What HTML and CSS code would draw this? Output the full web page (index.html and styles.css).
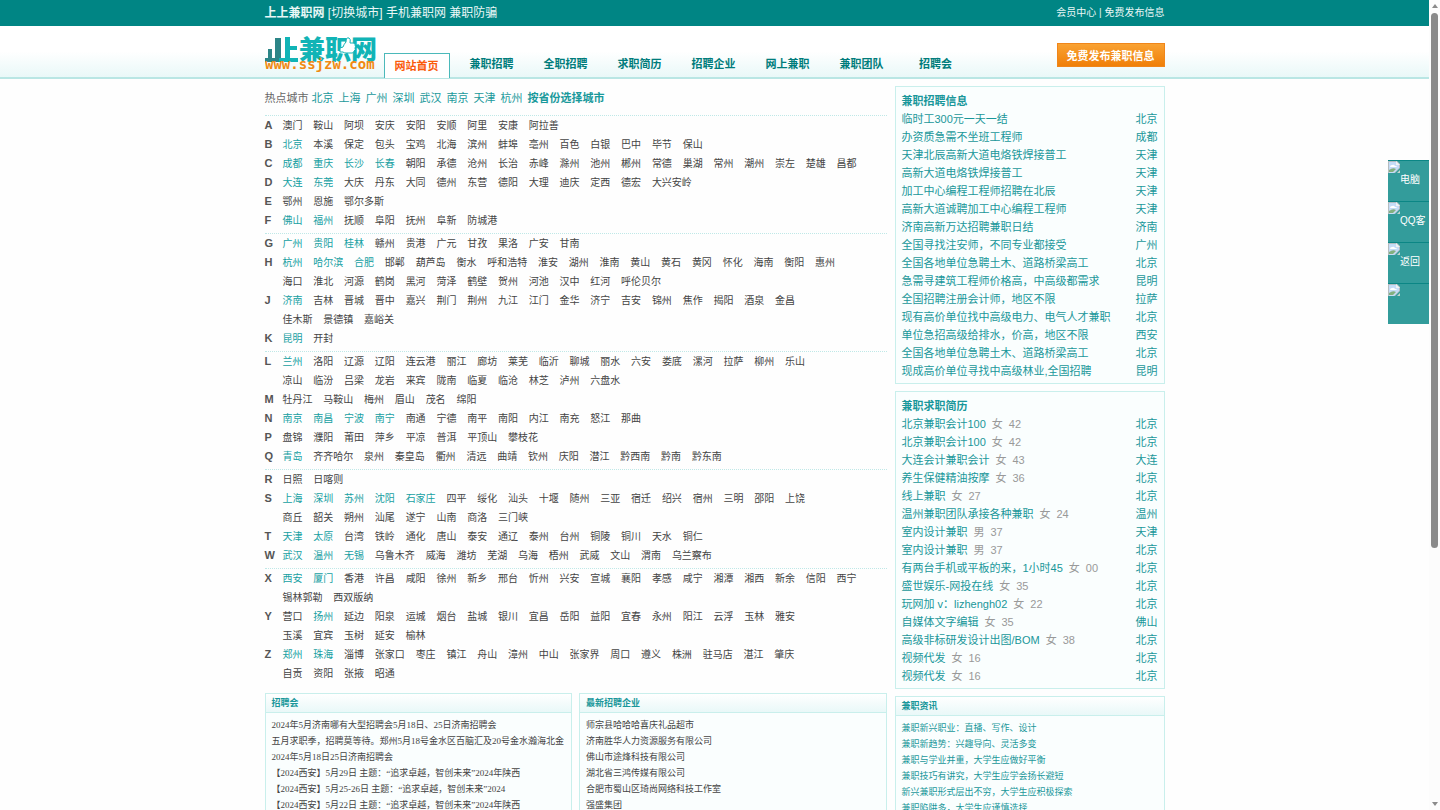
FILE: index.html
```html
<!DOCTYPE html>
<html lang="zh-CN">
<head>
<meta charset="utf-8">
<title>上上兼职网</title>
<link rel="stylesheet" href="styles.css">
</head>
<body>
<svg class="defs" aria-hidden="true">
  <symbol id="broken" viewBox="0 0 12 12">
    <path d="M0 0h9l3 3v4L7 12H0z" fill="#b4bcc0"/>
    <path d="M1 1h7v3h3v3l-5 5H1z" fill="#c5dcf7"/>
    <path d="M2 6q0-2 2-2 2-1 3 1 2 0 2 1z" fill="#fff"/>
    <path d="M1 11V9q4-3 7-1l-3 3z" fill="#84b07f"/>
    <path d="M8 0v4h4z" fill="#eef2f4"/>
    <path d="M12 9v3H9z" fill="#c3d6cc"/>
  </symbol>
</svg>
<div class="topbar">
  <div class="wrap topbar-in">
    <div class="top-left"><a href="#"><b>上上兼职网</b></a> <a href="#">[切换城市]</a> <a href="#">手机兼职网</a> <a href="#">兼职防骗</a></div>
    <div class="top-right"><a href="#">会员中心</a> | <a href="#">免费发布信息</a></div>
  </div>
</div>
<header class="header">
  <div class="wrap header-in">
    <a class="logo" href="#">
      <svg width="116" height="40" viewBox="0 0 116 40" role="img" aria-label="上上兼职网">
        <path d="M10 4h6v24H0v-4h3v-9h4v9h3z" fill="#2c8587"/>
        <path d="M20 3h5v9h7v4h-7v8h8v4H14v-4h6z" fill="#11b4b6"/>
        <text class="logo-cn" x="34" y="25">兼职网</text>
        <path d="M75 14l3-1q1-3 3-5 0-5 3-4 2 1 1 5h3q3 0 2 2 1 2 0 3 1 2-1 3 0 2-2 2h-6q-2 0-3-1h-3z" fill="#fff" stroke="#11b4b6"/>
        <text class="logo-url" x="0" y="35">www.ssjzw.com</text>
      </svg>
    </a>
    <nav class="nav">
      <a class="on" href="#">网站首页</a>
      <a href="#">兼职招聘</a><a href="#">全职招聘</a><a href="#">求职简历</a><a href="#">招聘企业</a><a href="#">网上兼职</a><a href="#">兼职团队</a><a href="#">招聘会</a>
    </nav>
    <button class="post" type="button">免费发布兼职信息</button>
  </div>
</header>
<div class="wrap content">
  <main class="main">
    <div class="hot"><span>热点城市</span> <a href="#">北京</a><a href="#">上海</a><a href="#">广州</a><a href="#">深圳</a><a href="#">武汉</a><a href="#">南京</a><a href="#">天津</a><a href="#">杭州</a><a href="#"><b>按省份选择城市</b></a></div>
    <section class="group">
      <div class="row"><b>A</b><div>
        <p><a>澳门</a> <a>鞍山</a> <a>阿坝</a> <a>安庆</a> <a>安阳</a> <a>安顺</a> <a>阿里</a> <a>安康</a> <a>阿拉善</a></p></div></div>
      <div class="row"><b>B</b><div>
        <p><a class="h">北京</a> <a>本溪</a> <a>保定</a> <a>包头</a> <a>宝鸡</a> <a>北海</a> <a>滨州</a> <a>蚌埠</a> <a>亳州</a> <a>百色</a> <a>白银</a> <a>巴中</a> <a>毕节</a> <a>保山</a></p></div></div>
      <div class="row"><b>C</b><div>
        <p><a class="h">成都</a> <a class="h">重庆</a> <a class="h">长沙</a> <a class="h">长春</a> <a>朝阳</a> <a>承德</a> <a>沧州</a> <a>长治</a> <a>赤峰</a> <a>滁州</a> <a>池州</a> <a>郴州</a> <a>常德</a> <a>巢湖</a> <a>常州</a> <a>潮州</a> <a>崇左</a> <a>楚雄</a> <a>昌都</a></p></div></div>
      <div class="row"><b>D</b><div>
        <p><a class="h">大连</a> <a class="h">东莞</a> <a>大庆</a> <a>丹东</a> <a>大同</a> <a>德州</a> <a>东营</a> <a>德阳</a> <a>大理</a> <a>迪庆</a> <a>定西</a> <a>德宏</a> <a>大兴安岭</a></p></div></div>
      <div class="row"><b>E</b><div>
        <p><a>鄂州</a> <a>恩施</a> <a>鄂尔多斯</a></p></div></div>
      <div class="row"><b>F</b><div>
        <p><a class="h">佛山</a> <a class="h">福州</a> <a>抚顺</a> <a>阜阳</a> <a>抚州</a> <a>阜新</a> <a>防城港</a></p></div></div>
    </section>
    <section class="group">
      <div class="row"><b>G</b><div>
        <p><a class="h">广州</a> <a class="h">贵阳</a> <a class="h">桂林</a> <a>赣州</a> <a>贵港</a> <a>广元</a> <a>甘孜</a> <a>果洛</a> <a>广安</a> <a>甘南</a></p></div></div>
      <div class="row"><b>H</b><div>
        <p><a class="h">杭州</a> <a class="h">哈尔滨</a> <a class="h">合肥</a> <a>邯郸</a> <a>葫芦岛</a> <a>衡水</a> <a>呼和浩特</a> <a>淮安</a> <a>湖州</a> <a>淮南</a> <a>黄山</a> <a>黄石</a> <a>黄冈</a> <a>怀化</a> <a>海南</a> <a>衡阳</a> <a>惠州</a></p>
        <p><a>海口</a> <a>淮北</a> <a>河源</a> <a>鹤岗</a> <a>黑河</a> <a>菏泽</a> <a>鹤壁</a> <a>贺州</a> <a>河池</a> <a>汉中</a> <a>红河</a> <a>呼伦贝尔</a></p></div></div>
      <div class="row"><b>J</b><div>
        <p><a class="h">济南</a> <a>吉林</a> <a>晋城</a> <a>晋中</a> <a>嘉兴</a> <a>荆门</a> <a>荆州</a> <a>九江</a> <a>江门</a> <a>金华</a> <a>济宁</a> <a>吉安</a> <a>锦州</a> <a>焦作</a> <a>揭阳</a> <a>酒泉</a> <a>金昌</a></p>
        <p><a>佳木斯</a> <a>景德镇</a> <a>嘉峪关</a></p></div></div>
      <div class="row"><b>K</b><div>
        <p><a class="h">昆明</a> <a>开封</a></p></div></div>
    </section>
    <section class="group">
      <div class="row"><b>L</b><div>
        <p><a class="h">兰州</a> <a>洛阳</a> <a>辽源</a> <a>辽阳</a> <a>连云港</a> <a>丽江</a> <a>廊坊</a> <a>莱芜</a> <a>临沂</a> <a>聊城</a> <a>丽水</a> <a>六安</a> <a>娄底</a> <a>漯河</a> <a>拉萨</a> <a>柳州</a> <a>乐山</a></p>
        <p><a>凉山</a> <a>临汾</a> <a>吕梁</a> <a>龙岩</a> <a>来宾</a> <a>陇南</a> <a>临夏</a> <a>临沧</a> <a>林芝</a> <a>泸州</a> <a>六盘水</a></p></div></div>
      <div class="row"><b>M</b><div>
        <p><a>牡丹江</a> <a>马鞍山</a> <a>梅州</a> <a>眉山</a> <a>茂名</a> <a>绵阳</a></p></div></div>
      <div class="row"><b>N</b><div>
        <p><a class="h">南京</a> <a class="h">南昌</a> <a class="h">宁波</a> <a class="h">南宁</a> <a>南通</a> <a>宁德</a> <a>南平</a> <a>南阳</a> <a>内江</a> <a>南充</a> <a>怒江</a> <a>那曲</a></p></div></div>
      <div class="row"><b>P</b><div>
        <p><a>盘锦</a> <a>濮阳</a> <a>莆田</a> <a>萍乡</a> <a>平凉</a> <a>普洱</a> <a>平顶山</a> <a>攀枝花</a></p></div></div>
      <div class="row"><b>Q</b><div>
        <p><a class="h">青岛</a> <a>齐齐哈尔</a> <a>泉州</a> <a>秦皇岛</a> <a>衢州</a> <a>清远</a> <a>曲靖</a> <a>钦州</a> <a>庆阳</a> <a>潜江</a> <a>黔西南</a> <a>黔南</a> <a>黔东南</a></p></div></div>
    </section>
    <section class="group">
      <div class="row"><b>R</b><div>
        <p><a>日照</a> <a>日喀则</a></p></div></div>
      <div class="row"><b>S</b><div>
        <p><a class="h">上海</a> <a class="h">深圳</a> <a class="h">苏州</a> <a class="h">沈阳</a> <a class="h">石家庄</a> <a>四平</a> <a>绥化</a> <a>汕头</a> <a>十堰</a> <a>随州</a> <a>三亚</a> <a>宿迁</a> <a>绍兴</a> <a>宿州</a> <a>三明</a> <a>邵阳</a> <a>上饶</a></p>
        <p><a>商丘</a> <a>韶关</a> <a>朔州</a> <a>汕尾</a> <a>遂宁</a> <a>山南</a> <a>商洛</a> <a>三门峡</a></p></div></div>
      <div class="row"><b>T</b><div>
        <p><a class="h">天津</a> <a class="h">太原</a> <a>台湾</a> <a>铁岭</a> <a>通化</a> <a>唐山</a> <a>泰安</a> <a>通辽</a> <a>泰州</a> <a>台州</a> <a>铜陵</a> <a>铜川</a> <a>天水</a> <a>铜仁</a></p></div></div>
      <div class="row"><b>W</b><div>
        <p><a class="h">武汉</a> <a class="h">温州</a> <a class="h">无锡</a> <a>乌鲁木齐</a> <a>威海</a> <a>潍坊</a> <a>芜湖</a> <a>乌海</a> <a>梧州</a> <a>武威</a> <a>文山</a> <a>渭南</a> <a>乌兰察布</a></p></div></div>
    </section>
    <section class="group">
      <div class="row"><b>X</b><div>
        <p><a class="h">西安</a> <a class="h">厦门</a> <a>香港</a> <a>许昌</a> <a>咸阳</a> <a>徐州</a> <a>新乡</a> <a>邢台</a> <a>忻州</a> <a>兴安</a> <a>宣城</a> <a>襄阳</a> <a>孝感</a> <a>咸宁</a> <a>湘潭</a> <a>湘西</a> <a>新余</a> <a>信阳</a> <a>西宁</a></p>
        <p><a>锡林郭勒</a> <a>西双版纳</a></p></div></div>
      <div class="row"><b>Y</b><div>
        <p><a>营口</a> <a class="h">扬州</a> <a>延边</a> <a>阳泉</a> <a>运城</a> <a>烟台</a> <a>盐城</a> <a>银川</a> <a>宜昌</a> <a>岳阳</a> <a>益阳</a> <a>宜春</a> <a>永州</a> <a>阳江</a> <a>云浮</a> <a>玉林</a> <a>雅安</a></p>
        <p><a>玉溪</a> <a>宜宾</a> <a>玉树</a> <a>延安</a> <a>榆林</a></p></div></div>
      <div class="row"><b>Z</b><div>
        <p><a class="h">郑州</a> <a class="h">珠海</a> <a>淄博</a> <a>张家口</a> <a>枣庄</a> <a>镇江</a> <a>舟山</a> <a>漳州</a> <a>中山</a> <a>张家界</a> <a>周口</a> <a>遵义</a> <a>株洲</a> <a>驻马店</a> <a>湛江</a> <a>肇庆</a></p>
        <p><a>自贡</a> <a>资阳</a> <a>张掖</a> <a>昭通</a></p></div></div>
    </section>
    <div class="pair">
      <section class="panel">
        <h2>招聘会</h2>
        <ul class="news dark">
          <li><a href="#">2024年5月济南哪有大型招聘会5月18日、25日济南招聘会</a></li>
          <li><a href="#">五月求职季，招聘莫等待。郑州5月18号金水区百脑汇及20号金水瀚海北金</a></li>
          <li><a href="#">2024年5月18日25日济南招聘会</a></li>
          <li><a href="#">【2024西安】5月29日 主题：“追求卓越，智创未来”2024年陕西</a></li>
          <li><a href="#">【2024西安】5月25-26日 主题：“追求卓越，智创未来”2024</a></li>
          <li><a href="#">【2024西安】5月22日 主题：“追求卓越，智创未来”2024年陕西</a></li>
        </ul>
      </section>
      <section class="panel">
        <h2>最新招聘企业</h2>
        <ul class="news dark">
          <li><a href="#">师宗县哈哈哈喜庆礼品超市</a></li>
          <li><a href="#">济南胜华人力资源服务有限公司</a></li>
          <li><a href="#">佛山市途烽科技有限公司</a></li>
          <li><a href="#">湖北省三鸿传媒有限公司</a></li>
          <li><a href="#">合肥市蜀山区琦尚网络科技工作室</a></li>
          <li><a href="#">强盛集团</a></li>
        </ul>
      </section>
    </div>
  </main>
  <aside class="side">
    <section class="box">
      <h2>兼职招聘信息</h2>
      <ul>
        <li><a href="#">临时工300元一天一结</a><a href="#">北京</a></li>
        <li><a href="#">办资质急需不坐班工程师</a><a href="#">成都</a></li>
        <li><a href="#">天津北辰高新大道电烙铁焊接普工</a><a href="#">天津</a></li>
        <li><a href="#">高新大道电烙铁焊接普工</a><a href="#">天津</a></li>
        <li><a href="#">加工中心编程工程师招聘在北辰</a><a href="#">天津</a></li>
        <li><a href="#">高新大道诚聘加工中心编程工程师</a><a href="#">天津</a></li>
        <li><a href="#">济南高新万达招聘兼职日结</a><a href="#">济南</a></li>
        <li><a href="#">全国寻找注安师，不同专业都接受</a><a href="#">广州</a></li>
        <li><a href="#">全国各地单位急聘土木、道路桥梁高工</a><a href="#">北京</a></li>
        <li><a href="#">急需寻建筑工程师价格高，中高级都需求</a><a href="#">昆明</a></li>
        <li><a href="#">全国招聘注册会计师，地区不限</a><a href="#">拉萨</a></li>
        <li><a href="#">现有高价单位找中高级电力、电气人才兼职</a><a href="#">北京</a></li>
        <li><a href="#">单位急招高级给排水，价高，地区不限</a><a href="#">西安</a></li>
        <li><a href="#">全国各地单位急聘土木、道路桥梁高工</a><a href="#">北京</a></li>
        <li><a href="#">现成高价单位寻找中高级林业,全国招聘</a><a href="#">昆明</a></li>
      </ul>
    </section>
    <section class="box">
      <h2>兼职求职简历</h2>
      <ul>
        <li><span><a href="#">北京兼职会计100</a><i>女</i><i>42</i></span><a href="#">北京</a></li>
        <li><span><a href="#">北京兼职会计100</a><i>女</i><i>42</i></span><a href="#">北京</a></li>
        <li><span><a href="#">大连会计兼职会计</a><i>女</i><i>43</i></span><a href="#">大连</a></li>
        <li><span><a href="#">养生保健精油按摩</a><i>女</i><i>36</i></span><a href="#">北京</a></li>
        <li><span><a href="#">线上兼职</a><i>女</i><i>27</i></span><a href="#">北京</a></li>
        <li><span><a href="#">温州兼职团队承接各种兼职</a><i>女</i><i>24</i></span><a href="#">温州</a></li>
        <li><span><a href="#">室内设计兼职</a><i>男</i><i>37</i></span><a href="#">天津</a></li>
        <li><span><a href="#">室内设计兼职</a><i>男</i><i>37</i></span><a href="#">北京</a></li>
        <li><span><a href="#">有两台手机或平板的来，1小时45</a><i>女</i><i>00</i></span><a href="#">北京</a></li>
        <li><span><a href="#">盛世娱乐-网投在线</a><i>女</i><i>35</i></span><a href="#">北京</a></li>
        <li><span><a href="#">玩网加 v：lizhengh02</a><i>女</i><i>22</i></span><a href="#">北京</a></li>
        <li><span><a href="#">自媒体文字编辑</a><i>女</i><i>35</i></span><a href="#">佛山</a></li>
        <li><span><a href="#">高级非标研发设计出图/BOM</a><i>女</i><i>38</i></span><a href="#">北京</a></li>
        <li><span><a href="#">视频代发</a><i>女</i><i>16</i></span><a href="#">北京</a></li>
        <li><span><a href="#">视频代发</a><i>女</i><i>16</i></span><a href="#">北京</a></li>
      </ul>
    </section>
    <section class="panel">
      <h2>兼职资讯</h2>
      <ul class="news">
        <li><a href="#">兼职新兴职业：直播、写作、设计</a></li>
        <li><a href="#">兼职新趋势：兴趣导向、灵活多变</a></li>
        <li><a href="#">兼职与学业并重，大学生应做好平衡</a></li>
        <li><a href="#">兼职技巧有讲究，大学生应学会扬长避短</a></li>
        <li><a href="#">新兴兼职形式层出不穷，大学生应积极探索</a></li>
        <li><a href="#">兼职陷阱多，大学生应谨慎选择</a></li>
      </ul>
    </section>
  </aside>
</div>
<div class="float">
  <a href="#"><svg><use href="#broken"/></svg><span>电脑</span></a>
  <a href="#"><svg><use href="#broken"/></svg><span>QQ客</span></a>
  <a href="#"><svg><use href="#broken"/></svg><span>返回</span></a>
  <a href="#"><svg><use href="#broken"/></svg></a>
</div>
<div class="scroll" aria-hidden="true"><div class="arrow"></div><div class="thumb"></div><div class="arrow down"></div></div>
</body>
</html>
```
FILE: styles.css
```css
html { scrollbar-width: none; }
body {
  margin: 0;
  padding-right: 11px;
  background: #fefefe;
  color: #444;
  font: 11px/18px "Liberation Sans", "Noto Sans CJK SC", sans-serif;
}
a { color: inherit; text-decoration: none; }
ul, p, h2 { margin: 0; padding: 0; list-style: none; }
.defs { position: absolute; width: 0; height: 0; }
.wrap { max-width: 900px; margin: 0 auto; }

.topbar { background: #008584; color: #e9f7f6; }
.topbar-in { display: flex; justify-content: space-between; line-height: 26px; }
.top-left { font-size: 12px; }
.top-right { font-size: 10px; }

.header {
  background: linear-gradient(#fff 50%, #e9f8f8);
  border-bottom: 2px solid #b9e6e4;
}
.header-in { display: flex; height: 51px; }
.logo { width: 119px; height: 51px; }
.logo svg { display: block; margin-top: 8px; }
.logo-cn { font: 900 26px "Noto Sans CJK SC", sans-serif; fill: #11b4b6; }
.logo-url { font: bold 14px "DejaVu Sans Mono", monospace; fill: #f08a12; }
.nav { flex: 1; display: flex; align-items: flex-end; }
.nav a {
  width: 74px;
  color: #007c7b;
  font-weight: bold;
  line-height: 26px;
  text-align: center;
}
.nav .on {
  width: 64px;
  margin: 0 5px -1px 0;
  border: 1px solid #4bb9ba;
  border-bottom: 0;
  background: #fff;
  color: #fa5a0a;
  line-height: 24px;
}
.post {
  height: 24px;
  margin-top: 17px;
  padding: 0 9px;
  border: 1px solid #f0861a;
  background: linear-gradient(#f9a233, #f07f08);
  color: #fff;
  font: bold 11px "Liberation Sans", "Noto Sans CJK SC", sans-serif;
}

.content { display: flex; gap: 8px; padding-top: 7px; }
.main { flex: 1; min-width: 0; }

.hot { padding: 3px 0 8px; color: #19999b; }
.hot span { color: #666; }
.hot a { margin-right: 5px; }
.group { padding-bottom: 3px; border-top: 1px dotted #bfe8e7; line-height: 19px; }
.row { display: flex; }
.row > b { width: 18px; color: #555; }
.row p { font-size: 10px; }
.row a { margin-right: 8px; }
.h { color: #16a0a2; }

.pair { display: grid; grid-template-columns: 1fr 1fr; gap: 7px; margin-top: 7px; }
.panel, .box { border: 1px solid #c9efec; background: #fafefe; }
.panel h2 {
  padding: 0 6px;
  border-bottom: 1px solid #c9efec;
  background: linear-gradient(#fff, #e9f8f8);
  color: #19979a;
  font-size: 9px;
  line-height: 18px;
}
.news {
  padding: 4px 6px;
  color: #19979a;
  font: 9px/16px "Liberation Serif", "Noto Sans CJK SC", sans-serif;
}
.news li { white-space: nowrap; }
.news.dark { color: #444; }

.side { display: flex; flex-direction: column; gap: 7px; width: 270px; }
.box { padding: 5px 6px 3px; color: #19979a; }
.box h2 { font-size: 11px; line-height: 18px; }
.box li { display: flex; justify-content: space-between; }
.box i { margin-left: 6px; color: #999; font-style: normal; }

.float { position: fixed; top: 160px; right: 11px; width: 41px; }
.float a {
  display: flex;
  height: 40px;
  border-top: 1px solid #0b8685;
  background: #339c9b;
  color: #fff;
  font-size: 10px;
  line-height: 38px;
  white-space: nowrap;
}
.float svg { flex: none; width: 12px; height: 12px; }

.scroll {
  position: fixed;
  top: 0;
  right: 0;
  bottom: 0;
  display: flex;
  flex-direction: column;
  align-items: center;
  width: 11px;
  background: #fcfcfc;
}
.arrow { margin: 4px 0 5px; border: 3px solid transparent; border-top: 0; border-bottom: 4px solid #8a8a8a; }
.down { margin: auto 0 4px; transform: rotate(180deg); }
.thumb { width: 7px; height: 66%; border-radius: 4px; background: #8a8a8a; }
```
